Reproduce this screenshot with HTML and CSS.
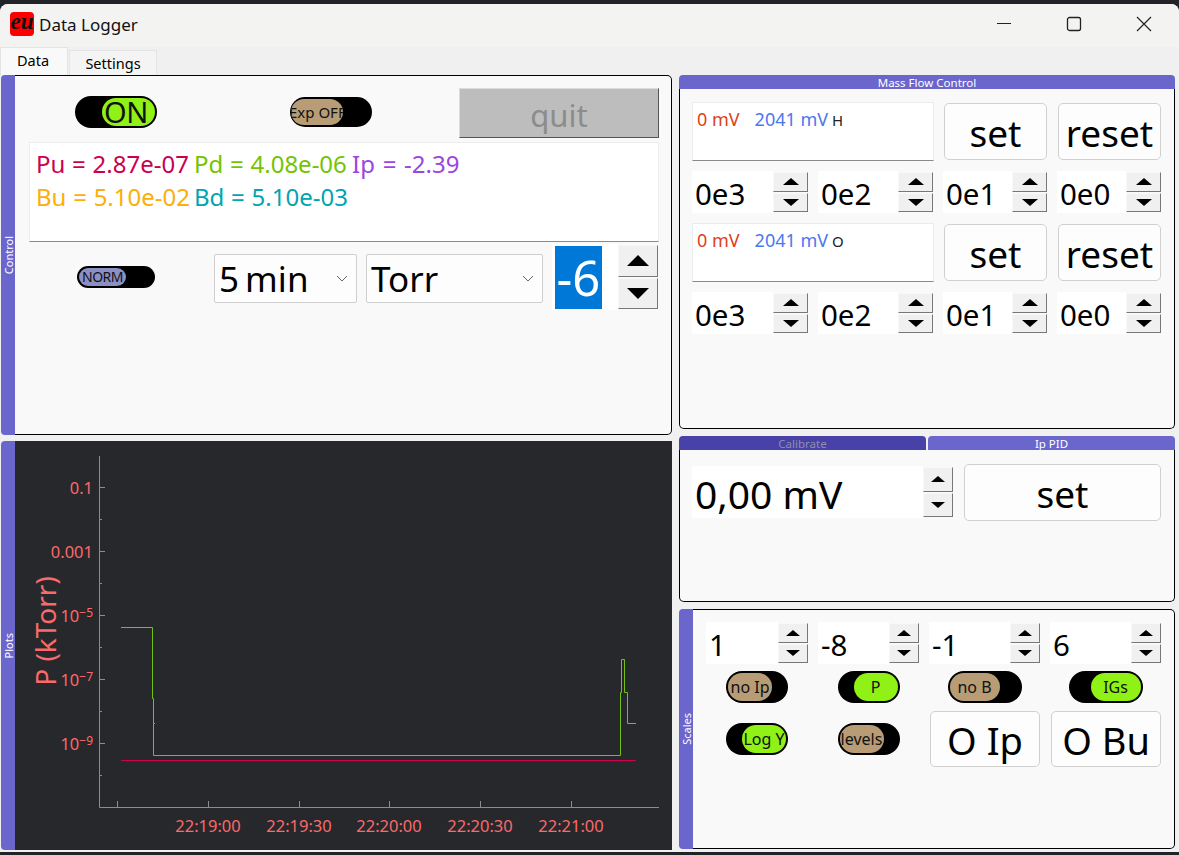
FILE: index.html
```html
<!DOCTYPE html>
<html lang="en">
<head>
    <meta charset="UTF-8">
    <title>Data Logger</title>
    <link rel="stylesheet" href="styles.css">
</head>
<body>
<div class="window">
    <header class="titlebar">
        <div class="app-icon">eu</div>
        <div class="app-title">Data Logger</div>
        <div class="win-buttons">
            <svg width="16" height="16" viewBox="0 0 16 16"><path d="M1 7.5H15" stroke="#222" stroke-width="1.2" fill="none"/></svg>
            <svg width="16" height="16" viewBox="0 0 16 16"><rect x="1.5" y="1.5" width="13" height="13" rx="2" stroke="#222" stroke-width="1.3" fill="none"/></svg>
            <svg width="16" height="16" viewBox="0 0 16 16"><path d="M1 1L15 15M15 1L1 15" stroke="#222" stroke-width="1.2" fill="none"/></svg>
        </div>
    </header>

    <nav class="tabbar">
        <div class="tab tab-active">Data</div>
        <div class="tab">Settings</div>
    </nav>

    <main class="columns">
        <div class="column">
            <!-- Control -->
            <section class="panel panel-control">
                <div class="side-tab"><span>Control</span></div>
                <div class="panel-body control-body">
                    <div class="control-top">
                        <div class="toggle toggle-on toggle-big"><span class="knob">ON</span></div>
                        <div class="toggle toggle-exp"><span class="knob">Exp OFF</span></div>
                        <button class="quit-btn">quit</button>
                    </div>
                    <div class="readout">
                        <span class="c-pu">Pu = 2.87e-07</span>
                        <span class="c-pd">Pd = 4.08e-06</span>
                        <span class="c-ip">Ip = -2.39</span>
                        <span class="c-bu">Bu = 5.10e-02</span>
                        <span class="c-bd">Bd = 5.10e-03</span>
                    </div>
                    <div class="control-bottom">
                        <div class="toggle toggle-norm"><span class="knob">NORM</span></div>
                        <div class="combo combo-time">5 min<svg width="12" height="7" viewBox="0 0 12 7"><path d="M1 1L6 6L11 1" stroke="#666" fill="none"/></svg></div>
                        <div class="combo combo-unit">Torr<svg width="12" height="7" viewBox="0 0 12 7"><path d="M1 1L6 6L11 1" stroke="#666" fill="none"/></svg></div>
                        <div class="exp-spin">
                            <div class="exp-value"><span class="selected">-6</span></div>
                            <div class="stepper stepper-big">
                                <button class="step step-up"></button>
                                <button class="step step-down"></button>
                            </div>
                        </div>
                    </div>
                </div>
            </section>

            <!-- Plots -->
            <section class="panel panel-plots">
                <div class="side-tab"><span>Plots</span></div>
                <div class="plot-body">
                    <svg class="chart" width="657" height="409" viewBox="15 441 657 409">
                        <g class="axis">
                            <path d="M99.5 456V807.5H659"/>
                            <path d="M99 487.5h6M99 519.5h3M99 551.5h6M99 583.5h3M99 615.5h6M99 647.5h3M99 679.5h6M99 711.5h3M99 743.5h6M99 775.5h3"/>
                            <path d="M117.5 807v-6M208.5 807v-6M299.5 807v-6M389.5 807v-6M480.5 807v-6M571.5 807v-6"/>
                        </g>
                        <g class="tick-y">
                            <text x="93" y="494">0.1</text>
                            <text x="93" y="558">0.001</text>
                            <text x="93" y="622">10<tspan class="sup" dy="-5">−5</tspan></text>
                            <text x="93" y="686">10<tspan class="sup" dy="-5">−7</tspan></text>
                            <text x="93" y="750">10<tspan class="sup" dy="-5">−9</tspan></text>
                        </g>
                        <g class="tick-x">
                            <text x="208" y="832">22:19:00</text>
                            <text x="299" y="832">22:19:30</text>
                            <text x="389" y="832">22:20:00</text>
                            <text x="480" y="832">22:20:30</text>
                            <text x="571" y="832">22:21:00</text>
                        </g>
                        <text class="y-label" transform="translate(56 631) rotate(-90)">P (kTorr)</text>
                        <path class="line-green" d="M121 627.5H152.5V698.5H153.5V723.5H155M153.5 723.5V755.5H620.5V692.5H621.5V659.5H624.5V692.5H627.5V723.5H636"/>
                        <path class="line-red" d="M121 760.5H636"/>
                    </svg>
                </div>
            </section>
        </div>

        <div class="column">
            <!-- Mass flow -->
            <section class="panel-top panel-mfc">
                <div class="top-tabs"><div class="top-tab">Mass Flow Control</div></div>
                <div class="panel-body mfc-body">
                    <div class="mfc-lcd"><span class="mv-red">0 mV</span><span class="mv-blue">2041 mV</span><span class="mv-id">H</span></div>
                    <button class="btn">set</button>
                    <button class="btn">reset</button>
                    <div class="spin"><div class="spin-value">0e3</div><div class="stepper"><button class="step step-up"></button><button class="step step-down"></button></div></div>
                    <div class="spin"><div class="spin-value">0e2</div><div class="stepper"><button class="step step-up"></button><button class="step step-down"></button></div></div>
                    <div class="spin"><div class="spin-value">0e1</div><div class="stepper"><button class="step step-up"></button><button class="step step-down"></button></div></div>
                    <div class="spin"><div class="spin-value">0e0</div><div class="stepper"><button class="step step-up"></button><button class="step step-down"></button></div></div>
                    <div class="mfc-lcd"><span class="mv-red">0 mV</span><span class="mv-blue">2041 mV</span><span class="mv-id">O</span></div>
                    <button class="btn">set</button>
                    <button class="btn">reset</button>
                    <div class="spin"><div class="spin-value">0e3</div><div class="stepper"><button class="step step-up"></button><button class="step step-down"></button></div></div>
                    <div class="spin"><div class="spin-value">0e2</div><div class="stepper"><button class="step step-up"></button><button class="step step-down"></button></div></div>
                    <div class="spin"><div class="spin-value">0e1</div><div class="stepper"><button class="step step-up"></button><button class="step step-down"></button></div></div>
                    <div class="spin"><div class="spin-value">0e0</div><div class="stepper"><button class="step step-up"></button><button class="step step-down"></button></div></div>
                </div>
            </section>

            <!-- Calibrate / PID -->
            <section class="panel-top panel-cal">
                <div class="top-tabs">
                    <div class="top-tab top-tab-dark">Calibrate</div>
                    <div class="top-tab">Ip PID</div>
                </div>
                <div class="panel-body cal-body">
                    <div class="spin spin-cal"><div class="spin-value">0,00 mV</div><div class="stepper"><button class="step step-up"></button><button class="step step-down"></button></div></div>
                    <button class="btn">set</button>
                </div>
            </section>

            <!-- Scales -->
            <section class="panel panel-scales">
                <div class="side-tab"><span>Scales</span></div>
                <div class="panel-body scales-body">
                    <div class="spin spin-scale"><div class="spin-value">1</div><div class="stepper"><button class="step step-up"></button><button class="step step-down"></button></div></div>
                    <div class="spin spin-scale"><div class="spin-value">-8</div><div class="stepper"><button class="step step-up"></button><button class="step step-down"></button></div></div>
                    <div class="spin spin-scale"><div class="spin-value">-1</div><div class="stepper"><button class="step step-up"></button><button class="step step-down"></button></div></div>
                    <div class="spin spin-scale"><div class="spin-value">6</div><div class="stepper"><button class="step step-up"></button><button class="step step-down"></button></div></div>

                    <div class="toggle toggle-s"><span class="knob">no Ip</span></div>
                    <div class="toggle toggle-s toggle-on"><span class="knob">P</span></div>
                    <div class="toggle toggle-s toggle-w"><span class="knob">no B</span></div>
                    <div class="toggle toggle-s toggle-w toggle-on"><span class="knob">IGs</span></div>

                    <div class="toggle toggle-s toggle-on"><span class="knob">Log Y</span></div>
                    <div class="toggle toggle-s"><span class="knob">levels</span></div>
                    <button class="btn btn-scale">O Ip</button>
                    <button class="btn btn-scale">O Bu</button>
                </div>
            </section>
        </div>
    </main>
</div>
</body>
</html>
```

FILE: styles.css
```css
* {
    box-sizing: border-box;
}

body {
    margin: 0;
    height: 855px;
    padding-top: 4px;
    overflow: hidden;
    background-color: #222327;
    font-family: "Noto Sans", "DejaVu Sans", sans-serif;
    color: #000;
}

button {
    font-family: inherit;
    padding: 0;
}

.window {
    height: 848px;
    background-color: #f0f0f0;
    border-radius: 8px 8px 0 0;
    overflow: hidden;
}

/* title bar */
.titlebar {
    height: 43px;
    display: flex;
    align-items: center;
    padding-left: 10px;
    padding-bottom: 3px;
    background-color: #f3f3f1;
}

.app-icon {
    width: 24px;
    height: 24px;
    background-color: #fb0000;
    border-radius: 4px;
    font-family: "Liberation Serif", serif;
    font-style: italic;
    font-weight: bold;
    font-size: 23px;
    line-height: 19px;
    text-align: center;
    color: #111;
}

.app-title {
    margin-left: 5px;
    font-size: 17px;
    color: #111;
}

.win-buttons {
    margin-left: auto;
    margin-right: 27px;
    display: flex;
    gap: 54px;
}

/* tabs */
.tabbar {
    height: 28px;
    display: flex;
    align-items: flex-end;
    background-color: #f0f0f0;
}

.tab {
    height: 25px;
    width: 88px;
    margin-left: 1px;
    background-color: #f4f4f4;
    border: 1px solid #e4e4e4;
    border-bottom: none;
    font-size: 14.5px;
    line-height: 25px;
    text-align: center;
}

.tab-active {
    height: 28px;
    width: 68px;
    margin-left: 0;
    padding-right: 2px;
    background-color: #f9f9f9;
    line-height: 24px;
}

/* layout */
.columns {
    display: grid;
    grid-template-columns: 671px 496px;
    column-gap: 7px;
    padding-left: 1px;
}

.column {
    display: flex;
    flex-direction: column;
}

.panel {
    display: flex;
}

.panel-control {
    height: 360px;
}

.panel-plots {
    height: 409px;
    margin-top: 6px;
}

.panel-mfc {
    height: 354px;
}

.panel-cal {
    height: 166px;
    margin-top: 7px;
}

.panel-scales {
    height: 240px;
    margin-top: 7px;
}

.panel-top {
    display: flex;
    flex-direction: column;
}

.side-tab {
    width: 14px;
    flex-shrink: 0;
    background-color: #6a66cc;
    border-radius: 4px 0 0 4px;
    color: #fff;
    font-size: 11px;
    display: flex;
    align-items: center;
    justify-content: center;
}

.side-tab span {
    writing-mode: vertical-rl;
    transform: rotate(180deg);
}

.panel-body {
    flex: 1;
    background-color: #f9f9f9;
    border: 1px solid #000;
    border-radius: 0 5px 5px 0;
}

.panel .panel-body {
    border-left: none;
}

.panel-top .panel-body {
    border-top: none;
    border-radius: 0 0 5px 5px;
}

.top-tabs {
    height: 14px;
    display: flex;
    gap: 2px;
}

.top-tab {
    flex: 1;
    background-color: #6a66cc;
    border-radius: 4px 4px 0 0;
    color: #fff;
    font-size: 11.5px;
    line-height: 15px;
    text-align: center;
    overflow: hidden;
}

.top-tab-dark {
    background-color: #4842a8;
    color: #8f8fa8;
}

/* toggles */
.toggle {
    width: 62px;
    height: 32px;
    display: flex;
    flex-shrink: 0;
    justify-content: flex-start;
    padding: 2px;
    background-color: #000;
    border-radius: 16px;
    overflow: hidden;
}

.toggle-on {
    justify-content: flex-end;
}

.knob {
    width: 44px;
    display: block;
    background-color: #b79c76;
    border-radius: 14px;
    color: #111;
    font-size: 16px;
    line-height: 28px;
    text-align: center;
    white-space: nowrap;
    overflow: hidden;
}

.toggle-on .knob {
    background-color: #8ff116;
}

.toggle-big {
    width: 82px;
    margin-left: 60px;
    margin-bottom: 2px;
}

.toggle-big .knob {
    width: 53px;
    font-size: 29px;
    letter-spacing: -0.5px;
    text-align: left;
    text-indent: 2px;
    overflow: visible;
}

.toggle-exp {
    width: 82px;
    height: 30px;
    margin-left: 133px;
    margin-bottom: 2px;
}

/* the label is longer than the knob, cut off like the real widget */
.toggle-exp .knob {
    width: 52px;
    font-size: 15px;
    line-height: 26px;
    text-indent: -2px;
    margin-left: -1px;
    text-align: left;
}

.toggle-norm {
    width: 78px;
    height: 22px;
    margin-left: 62px;
}

.toggle-norm .knob {
    width: 47px;
    background-color: #8a8fc4;
    font-size: 14px;
    line-height: 18px;
    letter-spacing: -0.5px;
}

.toggle-s {
    justify-self: center;
    align-self: center;
}

.toggle-s .knob {
    width: 44px;
}

.toggle-w {
    width: 74px;
}

.toggle-w .knob {
    width: 50px;
}

/* buttons */
.btn {
    padding-top: 2px;
    background-color: #fdfdfd;
    border: 1px solid #d0d0d0;
    border-radius: 5px;
    font-size: 37px;
    color: #000;
}

.quit-btn {
    width: 200px;
    height: 50px;
    margin-left: 87px;
    padding-top: 3px;
    background-color: #bdbdbd;
    border: 1px solid #dcdcdc;
    border-right-color: #555;
    border-bottom-color: #555;
    color: #8c8c8c;
    font-size: 31px;
    line-height: 44px;
}

/* spin boxes */
.spin {
    display: flex;
    align-items: center;
    height: 42px;
}

.spin-value {
    flex: 1;
    height: 100%;
    background-color: #fff;
    padding-left: 3px;
    font-size: 29.5px;
    line-height: 46px;
    overflow: hidden;
}

.stepper {
    width: 35px;
    flex-shrink: 0;
    height: 40px;
    display: flex;
    flex-direction: column;
    gap: 1px;
}

.step {
    flex: 1;
    display: flex;
    align-items: center;
    justify-content: center;
    background-color: #f0f0f0;
    border: 1px solid #f8f8f8;
    border-right-color: #777;
    border-bottom-color: #777;
}

.step::before {
    content: "";
    border-left: 8px solid transparent;
    border-right: 8px solid transparent;
}

.step-up::before {
    border-bottom: 7px solid #000;
}

.step-down::before {
    border-top: 7px solid #000;
}

/* control panel */
.control-body {
    padding-top: 12px;
}

.control-top {
    height: 50px;
    display: flex;
    align-items: center;
}

.readout {
    height: 100px;
    margin: 4px 12px 0 14px;
    padding: 4px 0 0 6px;
    background-color: #fff;
    border: 1px solid #ececec;
    border-bottom-color: #8a8a8a;
    display: grid;
    grid-template-columns: 158px 158px 158px;
    grid-auto-rows: 33px;
    font-size: 24px;
    line-height: 33px;
    word-spacing: 0.5px;
    white-space: nowrap;
}

.c-pu { color: #cc0050; }
.c-pd { color: #74c400; }
.c-ip { color: #9a46e0; word-spacing: 1.5px; }
.c-bu { color: #fcae0a; }
.c-bd { color: #00a5b0; }

.control-bottom {
    display: flex;
    align-items: center;
    height: 66px;
    margin-top: 2px;
}

.combo {
    height: 49px;
    margin-top: 3px;
    display: flex;
    align-items: center;
    justify-content: space-between;
    padding: 0 8px 0 4px;
    background-color: #fdfdfd;
    border: 1px solid #cfcfcf;
    border-radius: 2px;
    font-size: 35px;
}

.combo-time {
    width: 143px;
    margin-left: 59px;
    word-spacing: -3px;
}

.combo-unit {
    width: 177px;
    margin-left: 9px;
}

.exp-spin {
    display: flex;
    align-items: center;
    margin-left: 9px;
}

.exp-value {
    width: 66px;
    height: 66px;
    padding: 2px 16px 1px 3px;
    background-color: #fff;
}

.selected {
    display: block;
    height: 63px;
    background-color: #0078d7;
    color: #fff;
    font-size: 49px;
    line-height: 63px;
    text-align: center;
    white-space: nowrap;
}

.stepper-big {
    width: 40px;
    height: 64px;
}

.stepper-big .step::before {
    border-left-width: 11px;
    border-right-width: 11px;
}

.stepper-big .step-up::before {
    border-bottom-width: 11px;
}

.stepper-big .step-down::before {
    border-top-width: 11px;
}

/* plots */
.plot-body {
    flex: 1;
    background-color: #27282c;
}

.chart {
    display: block;
}

.axis path {
    stroke: #8c8c8c;
    fill: none;
}

.chart text {
    fill: #fb6a6a;
    font-family: "Noto Sans", sans-serif;
}

.tick-y text {
    font-size: 16.5px;
    text-anchor: end;
}

.tick-x text {
    font-size: 16.5px;
    text-anchor: middle;
}

.sup {
    font-size: 12px;
}

.chart .y-label {
    font-size: 28px;
    text-anchor: middle;
}

.line-green {
    stroke: #72c014;
    fill: none;
}

.line-red {
    stroke: #d0004a;
    fill: none;
}

/* mass flow */
.mfc-body {
    padding: 13px 13px 0 12px;
    display: grid;
    grid-template-columns: 116px 115px 104px 104px;
    grid-template-rows: 59px 42px 59px 42px;
    column-gap: 10px;
    row-gap: 10px;
    align-content: start;
}

.mfc-body .btn {
    margin: 1px 0 1px 1px;
}

.mfc-lcd {
    grid-column: span 2;
    margin-right: -1px;
    padding: 1px 0 0 4px;
    background-color: #fff;
    border: 1px solid #ececec;
    border-bottom-color: #8a8a8a;
    font-size: 18px;
    line-height: 30px;
    white-space: nowrap;
}

.mv-red { color: #e0401a; }
.mv-blue { color: #4a78f0; margin-left: 15px; }
.mv-id { color: #222; font-size: 15px; margin-left: 4px; }

/* calibrate */
.cal-body {
    padding: 14px 13px 0 12px;
    display: grid;
    grid-template-columns: 261px 197px;
    column-gap: 11px;
    align-items: start;
}

.cal-body .btn {
    height: 57px;
}

.spin-cal {
    height: 52px;
    margin-top: 2px;
}

.spin-cal .spin-value {
    font-size: 39px;
    line-height: 56px;
}

.spin-cal .stepper {
    width: 30px;
    height: 50px;
}

.spin-cal .step::before {
    border-left-width: 7px;
    border-right-width: 7px;
}

.spin-cal .step-up::before {
    border-bottom-width: 6px;
}

.spin-cal .step-down::before {
    border-top-width: 6px;
}

/* scales */
.scales-body {
    padding: 12px 13px 0 13px;
    display: grid;
    grid-template-columns: 102px 101px 111px 111px;
    grid-template-rows: 42px 32px 57px;
    column-gap: 10px;
    row-gap: 7px;
    align-content: start;
}

.spin-scale .stepper {
    width: 30px;
}

.spin-scale .step::before {
    border-left-width: 7px;
    border-right-width: 7px;
}

.spin-scale .step-up::before {
    border-bottom-width: 6px;
}

.spin-scale .step-down::before {
    border-top-width: 6px;
}

.btn-scale {
    margin: 1px 0 0 1px;
    font-size: 38px;
    white-space: nowrap;
}
```
